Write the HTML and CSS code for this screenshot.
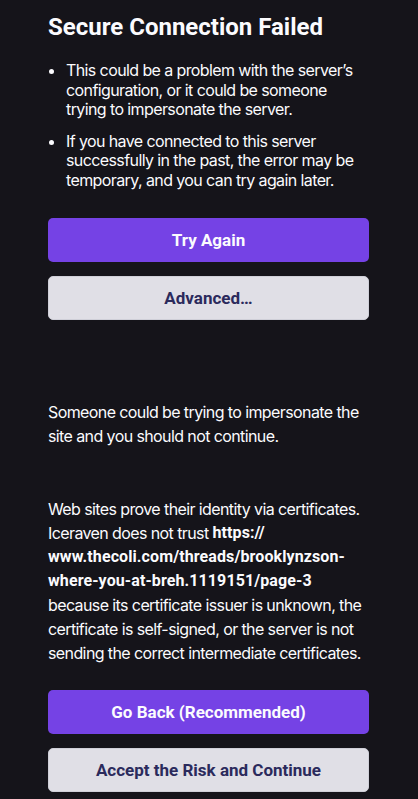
FILE: index.html
```html
<!DOCTYPE html>
<html lang="en">
<head>
  <meta charset="UTF-8">
  <meta name="viewport" content="width=device-width, initial-scale=1">
  <title>Secure Connection Failed</title>
  <link rel="stylesheet" href="styles.css">
</head>
<body>

  <div class="container">
    <h1>Secure Connection Failed</h1>

    <ul class="reasons">
      <li>This could be a problem with the server’s configuration, or it could be someone trying to impersonate the server.</li>
      <li>If you have connected to this server successfully in the past, the error may be temporary, and you can try again later.</li>
    </ul>

    <div class="actions">
      <button class="btn-primary">Try Again</button>
      <button class="btn-secondary">Advanced…</button>
    </div>

    <div class="advanced">
      <p class="warning">Someone could be trying to impersonate the site and you should not continue.</p>
      <p class="details">Web sites prove their identity via certificates. Iceraven does not trust <b>https://<br>www.thecoli.com/threads/brooklynzson-<br>where-you-at-breh.1119151/page-3</b> because its certificate issuer is unknown, the certificate is self-signed, or the server is not sending the correct intermediate certificates.</p>

      <div class="actions">
        <button class="btn-primary">Go Back (Recommended)</button>
        <button class="btn-secondary">Accept the Risk and Continue</button>
      </div>
    </div>
  </div>

</body>
</html>
```

FILE: styles.css
```css
body {
  margin: 0;
  background-color: #15141a;
  color: #fbfbfe;
  font-family: Inter, 'Noto Sans', sans-serif;
  font-size: 16px;
  letter-spacing: -0.6px;
}
.container {
  padding: 0 49px 0 48px;
}
h1 {
  margin: 0;
  padding-top: 11px;
  font-family: Roboto, sans-serif;
  font-weight: 700;
  font-size: 24px;
  line-height: 32px;
  letter-spacing: 0;
}
.reasons {
  margin: 18px 0 0;
  padding-left: 18px;
  line-height: 19.5px;
}
.reasons li {
  margin-bottom: 12px;
}
.reasons li:last-child {
  margin-bottom: 0;
}
.actions {
  display: flex;
  flex-direction: column;
  gap: 14px;
  margin-top: 28px;
}
button {
  height: 44px;
  border-radius: 5px;
  font-family: Roboto, sans-serif;
  font-weight: 700;
  font-size: 17px;
  letter-spacing: 0;
  cursor: pointer;
}
.btn-primary {
  background-color: #7542e5;
  color: #fbfbfe;
  border: none;
}
.btn-secondary {
  background-color: #e0dfe6;
  color: #2b2a5c;
  border: 1px solid #cfcfd8;
}
.advanced {
  margin-top: 80px;
  line-height: 24px;
}
.warning {
  margin: 0;
}
.details {
  margin: 49px 0 0;
}
.details b {
  font-family: Roboto, sans-serif;
  font-weight: 700;
  letter-spacing: 0.1px;
  vertical-align: top;
}
.advanced .actions {
  margin-top: 25px;
}
```
